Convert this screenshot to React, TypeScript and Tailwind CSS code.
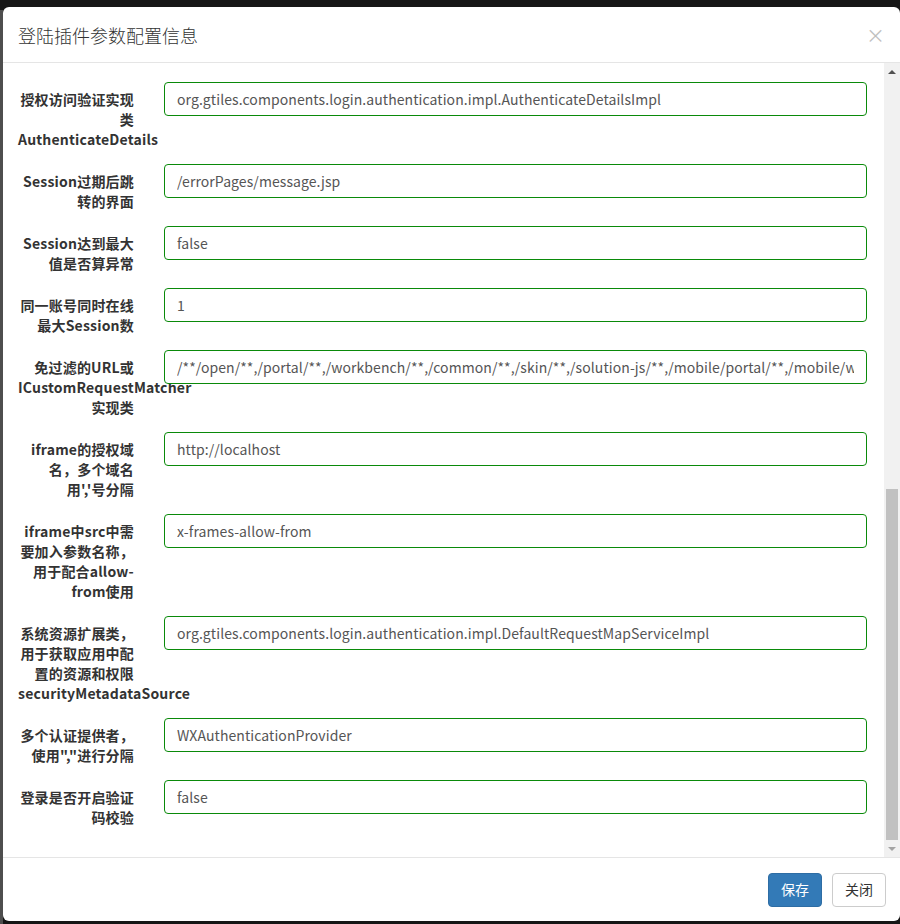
import React from "react";

const rows: { label: string[]; value: string }[] = [
  { label: ["授权访问验证实现", "类", "AuthenticateDetails"], value: "org.gtiles.components.login.authentication.impl.AuthenticateDetailsImpl" },
  { label: ["Session过期后跳", "转的界面"], value: "/errorPages/message.jsp" },
  { label: ["Session达到最大", "值是否算异常"], value: "false" },
  { label: ["同一账号同时在线", "最大Session数"], value: "1" },
  { label: ["免过滤的URL或", "ICustomRequestMatcher", "实现类"], value: "/**/open/**,/portal/**,/workbench/**,/common/**,/skin/**,/solution-js/**,/mobile/portal/**,/mobile/workbench/**,/mobile/common/**" },
  { label: ["iframe的授权域", "名，多个域名", "用','号分隔"], value: "http://localhost" },
  { label: ["iframe中src中需", "要加入参数名称，", "用于配合allow-", "from使用"], value: "x-frames-allow-from" },
  { label: ["系统资源扩展类，", "用于获取应用中配", "置的资源和权限", "securityMetadataSource"], value: "org.gtiles.components.login.authentication.impl.DefaultRequestMapServiceImpl" },
  { label: ["多个认证提供者，", "使用\",\"进行分隔"], value: "WXAuthenticationProvider" },
  { label: ["登录是否开启验证", "码校验"], value: "false" },
];

const font = { fontFamily: '"Noto Sans CJK SC", "Open Sans", sans-serif' };

export default function App() {
  return (
    <div className="w-[900px] h-[924px] bg-[#161616] overflow-hidden" style={font}>
      <div className="flex h-full">
        <div className="w-[3px] mt-[10px] bg-[#4e4e4e]" />
        <div className="flex-1 mt-[7px] h-[914px] bg-white rounded-md flex flex-col overflow-hidden text-[#333]">
          {/* header */}
          <div className="h-[56px] shrink-0 border-b border-[#e5e5e5] flex items-center justify-between pl-[15px] pr-[15px]">
            <div className="text-[18px] leading-[26px] font-light text-[#333]">登陆插件参数配置信息</div>
            <div className="text-[19px] font-normal text-[#000] opacity-25 leading-none">×</div>
          </div>
          {/* body */}
          <div className="flex-1 flex min-h-0">
            <div className="flex-1 pt-[19px] pl-[15px] pr-[17px] overflow-hidden">
              {rows.map((r, i) => (
                <div key={i} className="flex mb-[15px] gap-[30px]">
                  <div className="w-[116px] shrink-0 pt-[7px] text-right text-[14px] leading-[20px] font-bold tracking-[0.2px] text-[#333]">
                    {r.label.map((l, j) => (
                      <div key={j} className="whitespace-nowrap">{l}</div>
                    ))}
                  </div>
                  <input
                    readOnly
                    value={r.value}
                    className="flex-1 min-w-0 h-[34px] border border-[#0a8a0a] rounded-[4px] px-[12px] text-[14px] tracking-[0.08px] text-[#555] bg-white outline-none"
                  />
                </div>
              ))}
            </div>
            {/* scrollbar */}
            <div className="w-[16px] shrink-0 bg-[#f1f1f1] flex flex-col items-center">
              <div className="h-[17px] flex items-center justify-center">
                <div className="w-0 h-0 border-l-[4px] border-r-[4px] border-b-[4px] border-l-transparent border-r-transparent border-b-[#505050]" />
              </div>
              <div className="flex-1 w-full flex flex-col px-[2px]">
                <div className="h-[409px]" />
                <div className="h-[351px] bg-[#c1c1c1]" />
              </div>
              <div className="h-[17px] flex items-center justify-center">
                <div className="w-0 h-0 border-l-[4px] border-r-[4px] border-t-[4px] border-l-transparent border-r-transparent border-t-[#a3a3a3]" />
              </div>
            </div>
          </div>
          {/* footer */}
          <div className="h-[64px] shrink-0 border-t border-[#e5e5e5] flex items-center justify-end gap-[10px] pr-[14px]">
            <button className="h-[34px] px-[12px] rounded-[4px] bg-[#337ab7] border border-[#2e6da4] text-white text-[14px]">保存</button>
            <button className="h-[34px] px-[12px] rounded-[4px] bg-white border border-[#ccc] text-[#333] text-[14px]">关闭</button>
          </div>
        </div>
      </div>
    </div>
  );
}
